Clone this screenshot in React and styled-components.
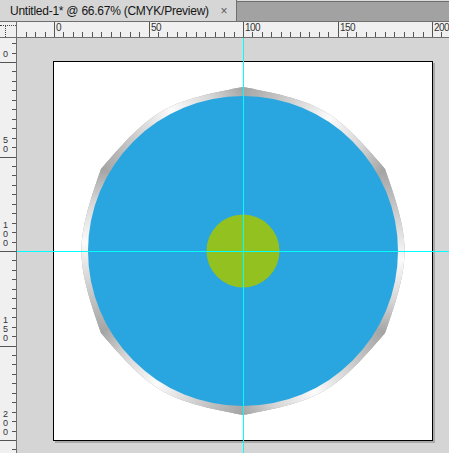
import React from 'react';
import styled, { createGlobalStyle } from 'styled-components';

// 1 ruler unit in screen px (66.67% zoom), minor tick every 5 units
const UNIT = 1.89;
const STEP = UNIT * 5;
const H_ORIGIN = 37; // x of "0" inside the horizontal ruler
const V_ORIGIN = 24; // y of "0" inside the vertical ruler
const CENTER = 189;

const GlobalStyle = createGlobalStyle`
  html, body {
    margin: 0;
    height: 100%;
    overflow: hidden;
  }
  body {
    font-family: 'Liberation Sans', Arial, sans-serif;
    background: #d5d5d5;
  }
  #root {
    height: 100%;
  }
`;

const Window = styled.div`
  height: 100%;
  display: flex;
  flex-direction: column;
`;

const TabBar = styled.div`
  flex: none;
  height: 22px;
  box-sizing: border-box;
  display: flex;
  background: linear-gradient(#dcdcdc 0 1px, #6f6f6f 1px 2px, #a2a2a2 2px);
  border-bottom: 1px solid #6f6f6f;
`;

const Tab = styled.div`
  width: 237px;
  box-sizing: border-box;
  display: flex;
  align-items: center;
  padding-left: 10px;
  background: #d6d6d6;
  border-right: 1px solid #6f6f6f;
  font-size: 12px;
  letter-spacing: -0.25px;
  color: #151515;
`;

const TabTitle = styled.span`
  flex: 1;
  white-space: nowrap;
`;

const Close = styled.span`
  width: 24px;
  text-align: center;
  font-size: 12px;
  color: #5a5a5a;
`;

const Workspace = styled.div`
  flex: 1;
  min-height: 0;
  display: grid;
  grid-template-columns: 17px 1fr;
  grid-template-rows: 16px 1fr;
`;

const Corner = styled.div`
  position: relative;
  box-sizing: border-box;
  background: #f0f0f0;
  border-right: 1px solid #6f6f6f;
  border-bottom: 1px solid #6f6f6f;
  &::before {
    content: '';
    position: absolute;
    top: 3px;
    left: 0;
    right: 0;
    border-top: 1px dotted #444;
  }
  &::after {
    content: '';
    position: absolute;
    top: 4px;
    bottom: 0;
    left: 5px;
    border-left: 1px dotted #444;
  }
`;

const Ruler = styled.div`
  position: relative;
  overflow: hidden;
  box-sizing: border-box;
  background: #f0f0f0;
  border-${(p) => (p.$vertical ? 'right' : 'bottom')}: 1px solid #6f6f6f;
  svg {
    display: block;
    width: 100%;
    height: 100%;
  }
`;

const HLabel = styled.span`
  position: absolute;
  top: 1px;
  font-size: 10px;
  line-height: 10px;
  letter-spacing: -0.5px;
  color: #333;
`;

const VLabel = styled.span`
  position: absolute;
  left: 3px;
  display: flex;
  flex-direction: column;
  font-size: 9px;
  line-height: 9px;
  color: #333;
`;

const Canvas = styled.div`
  position: relative;
  overflow: hidden;
  background: #d5d5d5;
  padding: 23px 0 0 36px;
`;

const Artboard = styled.div`
  width: 380px;
  height: 380px;
  box-sizing: border-box;
  border: 1px solid #000;
  background: #fff;
  box-shadow: 2px 2px 0 #a9a9a9;
  svg {
    display: block;
  }
`;

const Guide = styled.div`
  position: absolute;
  z-index: 2;
  background: #00ffff;
  ${(p) =>
    p.$vertical
      ? `left: ${p.$at}px; top: 0; bottom: 0; width: 1px;`
      : `top: ${p.$at}px; left: 0; right: 0; height: 1px;`}
`;

const range = (from, to) => {
  const out = [];
  for (let k = from; k <= to; k++) out.push(k);
  return out;
};

const HRuler = () => (
  <Ruler>
    <svg>
      {range(-3, 42).map((k) => {
        const x = Math.round(H_ORIGIN + k * STEP);
        const major = k % 10 === 0;
        return (
          <rect key={k} x={x} y={major ? 0 : 10} width="1" height={major ? 15 : 5} fill="#555" />
        );
      })}
    </svg>
    {range(0, 4).map((k) => (
      <HLabel key={k} style={{ left: Math.round(H_ORIGIN + k * STEP * 10) + 2 }}>
        {k * 50}
      </HLabel>
    ))}
  </Ruler>
);

const VRuler = () => (
  <Ruler $vertical>
    <svg>
      {range(-2, 42).map((k) => {
        const y = Math.round(V_ORIGIN + k * STEP);
        const major = k % 10 === 0;
        return (
          <rect key={k} x={major ? 0 : 12} y={y} width={major ? 16 : 4} height="1" fill="#555" />
        );
      })}
    </svg>
    {range(0, 4).map((k) => {
      const digits = String(k * 50).split('');
      const tick = Math.round(V_ORIGIN + k * STEP * 10);
      return (
        <VLabel key={k} style={{ top: tick - 3 - digits.length * 9 }}>
          {digits.map((d, i) => (
            <span key={i}>{d}</span>
          ))}
        </VLabel>
      );
    })}
  </Ruler>
);

// pointy-top hexagon whose sides bulge out a little around the disc
const HEX_R = 164;
const PULL = 0.45;
const LIFT = 26;
const vertices = range(0, 5).map((i) => {
  const a = ((-90 + i * 60) * Math.PI) / 180;
  return [CENTER + HEX_R * Math.cos(a), CENTER + HEX_R * Math.sin(a)];
});

const edgeCurve = (a, b) => {
  const dx = b[0] - a[0];
  const dy = b[1] - a[1];
  const len = Math.hypot(dx, dy);
  const ux = dx / len;
  const uy = dy / len;
  const nx = uy;
  const ny = -ux;
  const c1 = [a[0] + ux * len * PULL + nx * LIFT, a[1] + uy * len * PULL + ny * LIFT];
  const c2 = [b[0] - ux * len * PULL + nx * LIFT, b[1] - uy * len * PULL + ny * LIFT];
  return `C ${c1.join(' ')} ${c2.join(' ')} ${b.join(' ')}`;
};

const next = (i) => vertices[(i + 1) % 6];

const hexPath =
  `M ${vertices[0].join(' ')} ` + vertices.map((v, i) => edgeCurve(v, next(i))).join(' ') + ' Z';

const Artwork = () => (
  <svg width="378" height="378" viewBox="0 0 378 378">
    <defs>
      {vertices.map((v, i) => (
        <linearGradient
          key={i}
          id={`edge${i}`}
          gradientUnits="userSpaceOnUse"
          x1={v[0]}
          y1={v[1]}
          x2={next(i)[0]}
          y2={next(i)[1]}
        >
          <stop offset="0" stopColor="#a3a3a3" />
          <stop offset="0.22" stopColor="#c4c4c4" />
          <stop offset="0.55" stopColor="#fbfbfb" />
          <stop offset="0.8" stopColor="#d6d6d6" />
          <stop offset="1" stopColor="#a3a3a3" />
        </linearGradient>
      ))}
    </defs>
    <path d={hexPath} fill="#a3a3a3" />
    {vertices.map((v, i) => (
      <path
        key={i}
        d={`M ${CENTER} ${CENTER} L ${v.join(' ')} ${edgeCurve(v, next(i))} Z`}
        fill={`url(#edge${i})`}
      />
    ))}
    <circle cx={CENTER} cy={CENTER} r="155" fill="#29a6df" />
    <circle cx={CENTER} cy={CENTER} r="36.5" fill="#93c11f" />
  </svg>
);

export default function App() {
  return (
    <>
      <GlobalStyle />
      <Window>
        <TabBar>
          <Tab>
            <TabTitle>Untitled-1* @ 66.67% (CMYK/Preview)</TabTitle>
            <Close>×</Close>
          </Tab>
        </TabBar>
        <Workspace>
          <Corner />
          <HRuler />
          <VRuler />
          <Canvas>
            <Artboard>
              <Artwork />
            </Artboard>
            <Guide $vertical $at={226} />
            <Guide $at={213} />
          </Canvas>
        </Workspace>
      </Window>
    </>
  );
}
